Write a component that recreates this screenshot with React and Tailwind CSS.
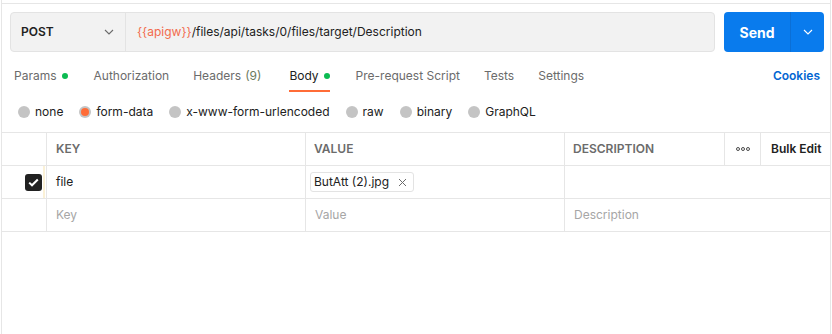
import React from "react";

const font = { fontFamily: "Inter, 'Noto Sans', sans-serif" };

function Chevron({ className = "", color = "#6b6b6b" }) {
  return (
    <svg width="10" height="6" viewBox="0 0 10 6" className={className}>
      <path d="M1 1 L5 5 L9 1" fill="none" stroke={color} strokeWidth="1.1" />
    </svg>
  );
}

function Dot() {
  return <span className="inline-block w-[6px] h-[6px] rounded-full bg-[#0cbb52] ml-[5px]" />;
}

function Radio({ label, selected }) {
  return (
    <div className="flex items-center gap-[5px]">
      {selected ? (
        <span className="w-[12px] h-[12px] rounded-full bg-[#c4c4c4] flex items-center justify-center">
          <span className="w-[8px] h-[8px] rounded-full bg-[#ff6c37]" />
        </span>
      ) : (
        <span className="w-[12px] h-[12px] rounded-full bg-[#c4c4c4]" />
      )}
      <span className="text-[12px] text-[#212121]">{label}</span>
    </div>
  );
}

export default function App() {
  return (
    <div className="w-[832px] h-[334px] bg-white overflow-hidden" style={font}>
      <div className="ml-[1px] w-[830px] h-full border-x border-[#e6e6e6] flex flex-col">
        <div className="h-[4px] border-b border-[#e6e6e6] shrink-0" />
        {/* URL bar */}
        <div className="flex pl-[8px] pr-[4px] mt-[8px] h-[40px] shrink-0">
          <div className="flex w-[705px] h-full rounded-[4px] border border-[#e3e3e3] bg-[#f2f2f2]">
            <div className="w-[115px] flex items-center justify-between pl-[10px] pr-[11px] border-r border-[#e3e3e3]">
              <span className="text-[12px] font-semibold text-[#212121]">POST</span>
              <Chevron />
            </div>
            <div className="flex items-center pl-[11px] text-[12px] text-[#212121]">
              <span className="text-[#f26b4d]">{"{{apigw}}"}</span>
              <span>/files/api/tasks/0/files/target/Description</span>
            </div>
          </div>
          <div className="ml-[9px] w-[100px] h-full rounded-[4px] bg-[#097bed] flex">
            <div className="w-[67px] flex items-center justify-center text-white font-bold text-[14px] border-r border-[#0b6fd6]">
              Send
            </div>
            <div className="flex-1 flex items-center justify-center">
              <Chevron color="#ffffff" />
            </div>
          </div>
        </div>
        {/* Tabs */}
        <div className="flex items-stretch h-[32px] mt-[8px] pl-[12px] pr-[10px] shrink-0 text-[12px]">
          <div className="flex items-center text-[#6b6b6b] mr-[26px]">Params<Dot /></div>
          <div className="flex items-center text-[#6b6b6b] mr-[24px]">Authorization</div>
          <div className="flex items-center text-[#6b6b6b] mr-[28px]">Headers <span className="ml-[4px] text-[#6b7a5e]">(9)</span></div>
          <div className="flex items-center text-[#212121] mr-[26px] border-b-2 border-[#ff6c37] pt-[2px]">Body<Dot /></div>
          <div className="flex items-center text-[#6b6b6b] mr-[24px]">Pre-request Script</div>
          <div className="flex items-center text-[#6b6b6b] mr-[24px]">Tests</div>
          <div className="flex items-center text-[#6b6b6b]">Settings</div>
          <div className="flex-1" />
          <div className="flex items-center text-[#0265d2] font-semibold">Cookies</div>
        </div>
        {/* Radios */}
        <div className="flex items-center h-[40px] pl-[16px] gap-[16px] shrink-0">
          <Radio label="none" />
          <Radio label="form-data" selected />
          <Radio label="x-www-form-urlencoded" />
          <Radio label="raw" />
          <Radio label="binary" />
          <Radio label="GraphQL" />
        </div>
        {/* Table */}
        <div className="border-t border-[#e6e6e6] text-[12px]">
          <div className="flex h-[33px] border-b border-[#e6e6e6]">
            <div className="w-[45px] border-r border-[#e6e6e6]" />
            <div className="w-[259px] border-r border-[#e6e6e6] flex items-center pl-[9px] font-semibold text-[#6b6b6b]">KEY</div>
            <div className="w-[259px] border-r border-[#e6e6e6] flex items-center pl-[8px] font-semibold text-[#6b6b6b]">VALUE</div>
            <div className="w-[160px] border-r border-[#e6e6e6] flex items-center pl-[8px] font-semibold text-[#6b6b6b]">DESCRIPTION</div>
            <div className="w-[36px] border-r border-[#e6e6e6] flex items-center justify-center">
              <svg width="14" height="4" viewBox="0 0 14 4">
                <circle cx="2" cy="2" r="1.5" fill="none" stroke="#212121" strokeWidth="0.8" />
                <circle cx="7" cy="2" r="1.5" fill="none" stroke="#212121" strokeWidth="0.8" />
                <circle cx="12" cy="2" r="1.5" fill="none" stroke="#212121" strokeWidth="0.8" />
              </svg>
            </div>
            <div className="flex-1 flex items-center pl-[10px] font-semibold text-[#212121]">Bulk Edit</div>
          </div>
          <div className="flex h-[33px] border-b border-[#e6e6e6]">
            <div className="w-[45px] border-r border-[#e6e6e6] flex items-center justify-end pr-[4px] relative">
              <span className="w-[17px] h-[17px] rounded-[3px] bg-[#212121] flex items-center justify-center">
                <svg width="11" height="9" viewBox="0 0 11 9">
                  <path d="M1.2 4.6 L4 7.3 L9.8 1.5" fill="none" stroke="#ffffff" strokeWidth="2" />
                </svg>
              </span>
              <span className="absolute right-[1px] top-0 bottom-0 w-[2px] bg-[#fbf1d6]" />
            </div>
            <div className="w-[259px] border-r border-[#e6e6e6] flex items-center pl-[9px] text-[#212121]">file</div>
            <div className="w-[259px] border-r border-[#e6e6e6] flex items-center pl-[4px]">
              <div className="h-[20px] flex items-center pl-[3px] pr-[6px] border border-[#e3e3e3] rounded-[3px] text-[#212121]">
                <span>ButAtt (2).jpg</span>
                <svg width="9" height="9" viewBox="0 0 9 9" className="ml-[9px]">
                  <path d="M1 1 L8 8 M8 1 L1 8" stroke="#6b6b6b" strokeWidth="1" />
                </svg>
              </div>
            </div>
            <div className="flex-1" />
          </div>
          <div className="flex h-[33px] border-b border-[#e6e6e6]">
            <div className="w-[45px] border-r border-[#e6e6e6]" />
            <div className="w-[259px] border-r border-[#e6e6e6] flex items-center pl-[9px] text-[#a6a6a6]">Key</div>
            <div className="w-[259px] border-r border-[#e6e6e6] flex items-center pl-[9px] text-[#a6a6a6]">Value</div>
            <div className="flex-1 flex items-center pl-[9px] text-[#a6a6a6]">Description</div>
          </div>
        </div>
      </div>
    </div>
  );
}
